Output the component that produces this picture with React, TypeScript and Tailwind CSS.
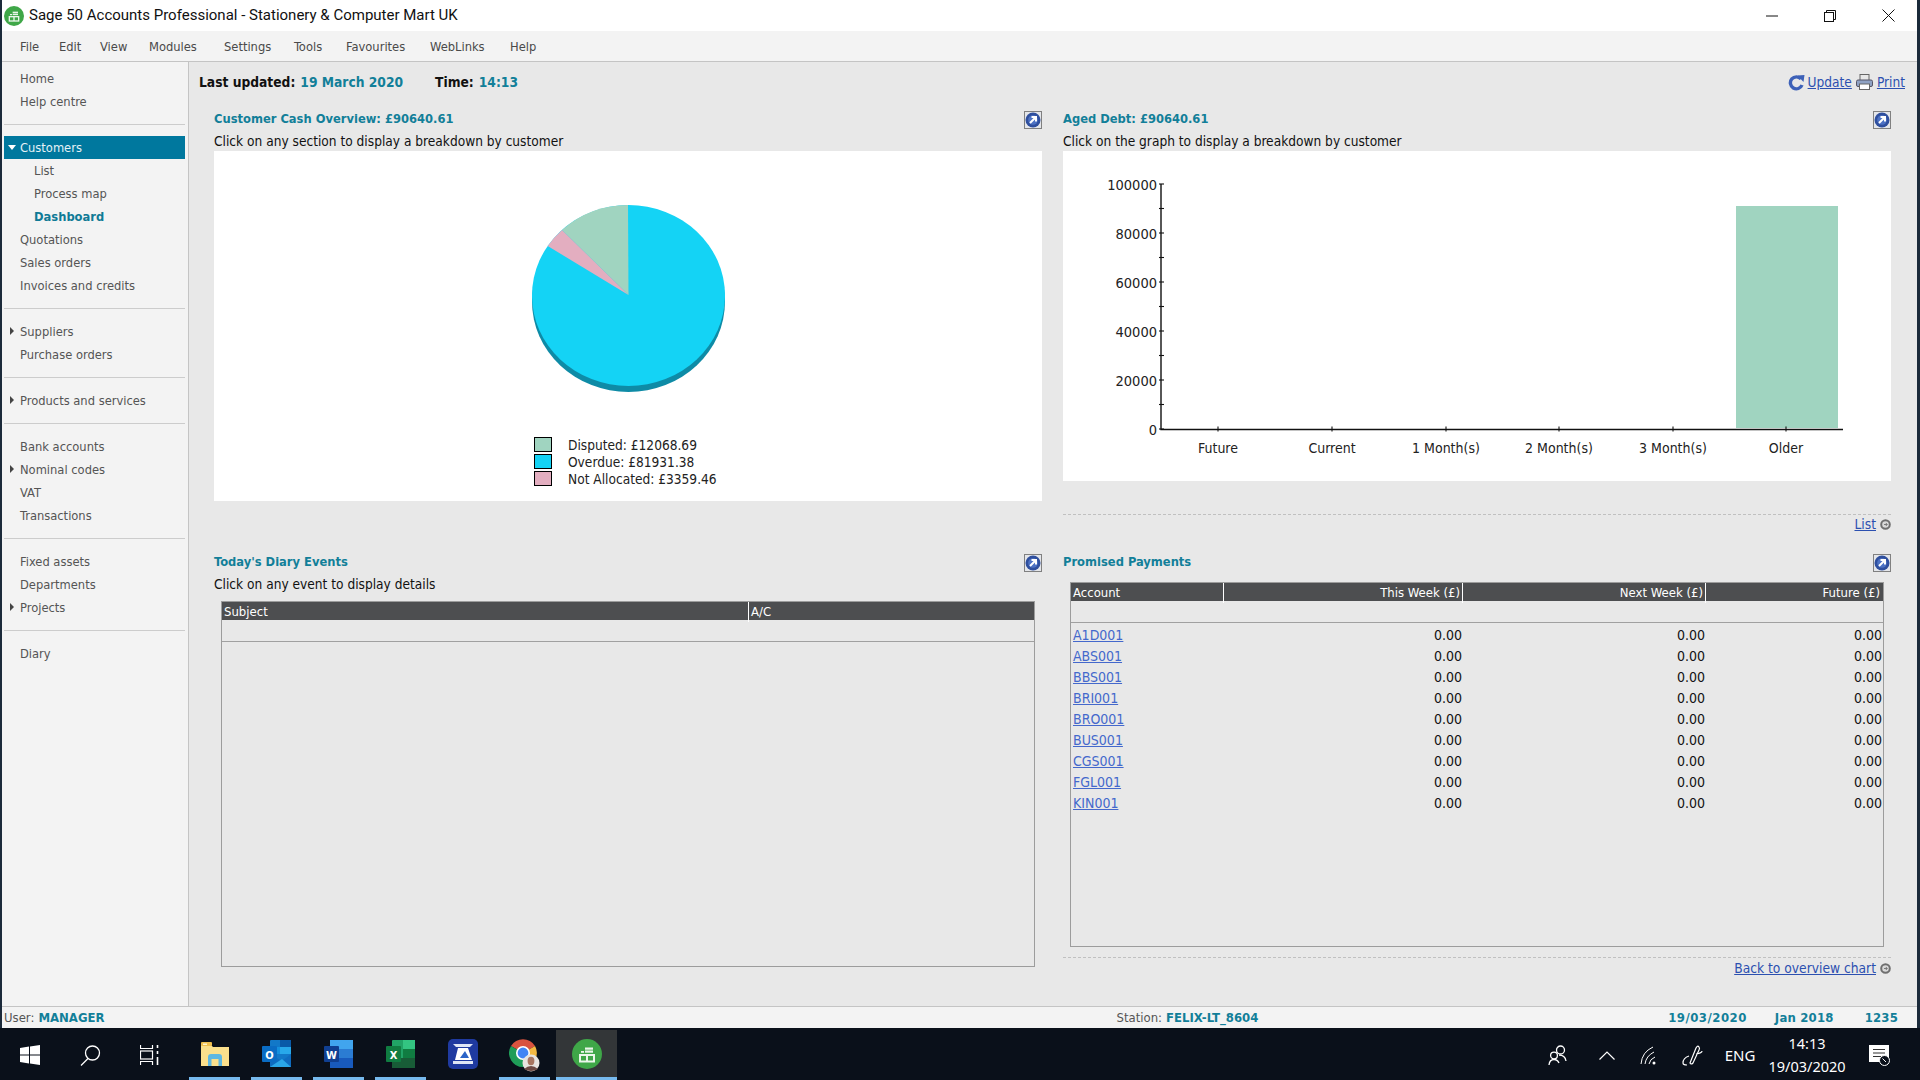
import React from "react";

const SIDE_GROUPS: { label: string; kind?: string; arrow?: boolean }[][] = [
  [{ label: "Home" }, { label: "Help centre" }],
  [
    { label: "Customers", kind: "active" },
    { label: "List", kind: "sub" },
    { label: "Process map", kind: "sub" },
    { label: "Dashboard", kind: "current" },
    { label: "Quotations" },
    { label: "Sales orders" },
    { label: "Invoices and credits" },
  ],
  [{ label: "Suppliers", arrow: true }, { label: "Purchase orders" }],
  [{ label: "Products and services", arrow: true }],
  [{ label: "Bank accounts" }, { label: "Nominal codes", arrow: true }, { label: "VAT" }, { label: "Transactions" }],
  [{ label: "Fixed assets" }, { label: "Departments" }, { label: "Projects", arrow: true }],
  [{ label: "Diary" }],
];

const MENU: [string, string][] = [
  ["File", "w-[39px]"],
  ["Edit", "w-[41px]"],
  ["View", "w-[49px]"],
  ["Modules", "w-[75px]"],
  ["Settings", "w-[70px]"],
  ["Tools", "w-[52px]"],
  ["Favourites", "w-[84px]"],
  ["WebLinks", "w-[80px]"],
  ["Help", "w-[40px]"],
];

const ACCOUNTS = ["A1D001", "ABS001", "BBS001", "BRI001", "BRO001", "BUS001", "CGS001", "FGL001", "KIN001"];

function CornerIcon() {
  return (
    <svg width="18" height="18" viewBox="0 0 18 18" className="shrink-0">
      <rect x="0.5" y="0.5" width="17" height="17" fill="#e4e6ea" stroke="#808080" />
      <circle cx="9" cy="9" r="7.5" fill="#2f4f9e" />
      <circle cx="9" cy="9" r="4.8" fill="#4d72c4" />
      <path d="M6 12 L11 7 M7.5 6 H12 V10.5" stroke="#fff" strokeWidth="2" fill="none" />
    </svg>
  );
}

function GoIcon() {
  return (
    <svg width="11" height="11" viewBox="0 0 11 11" className="shrink-0">
      <circle cx="5.5" cy="5.5" r="4.3" fill="#d9d9d9" stroke="#6f6f6f" strokeWidth="2" />
      <path d="M4 5.5 H7 M5.8 4 L7.3 5.5 L5.8 7" stroke="#6f6f6f" strokeWidth="0.9" fill="none" />
    </svg>
  );
}

function SageIcon({ size }: { size: number }) {
  return (
    <svg width={size} height={size} viewBox="0 0 30 30">
      <circle cx="15" cy="15" r="15" fill="#3fa748" />
      <rect x="7" y="15" width="16" height="8.5" fill="#eaf6ea" />
      <rect x="9" y="17" width="5" height="4.5" fill="#3fa748" />
      <rect x="16" y="17" width="5" height="4.5" fill="#3fa748" />
      <rect x="13" y="11.5" width="8" height="2.2" fill="#eaf6ea" />
      <rect x="13" y="8.5" width="8" height="2.2" fill="#eaf6ea" />
      <rect x="9" y="12" width="3" height="1.8" fill="#eaf6ea" />
    </svg>
  );
}

function Sidebar() {
  return (
    <aside className="w-[187px] shrink-0 border-r border-[#c4c4c4] bg-[#f3f3f3] text-[12.8px] text-[#555555] flex flex-col">
      {SIDE_GROUPS.map((g, i) => (
        <div key={i} className={i === 0 ? "ml-[2px] mr-[3px] pt-[5px] pb-[11px] border-b border-[#cccccc]" : i === SIDE_GROUPS.length - 1 ? "ml-[2px] mr-[3px] pt-[11px]" : "ml-[2px] mr-[3px] py-[11px] border-b border-[#cccccc]"}>
          {g.map((it) => {
            if (it.kind === "active") {
              return (
                <div key={it.label} className="h-[23px] flex items-center bg-[#00789e] text-[#e4f2f6] relative pl-[16px]">
                  <span className="absolute left-[4px] top-[9px] w-0 h-0 border-x-[4px] border-x-transparent border-t-[5px] border-t-white" />
                  {it.label}
                </div>
              );
            }
            return (
              <div
                key={it.label}
                className={
                  it.kind === "sub"
                    ? "h-[23px] flex items-center pl-[30px]"
                    : it.kind === "current"
                      ? "h-[23px] flex items-center pl-[30px] font-bold text-[#0f7a96]"
                      : "h-[23px] flex items-center pl-[16px] relative"
                }
              >
                {it.arrow && <span className="absolute left-[6px] top-[7px] w-0 h-0 border-y-[4px] border-y-transparent border-l-[4px] border-l-[#444444]" />}
                {it.label}
              </div>
            );
          })}
        </div>
      ))}
    </aside>
  );
}

function Pie() {
  return (
    <svg width="194" height="188" viewBox="0 0 194 188" className="mt-[54px] ml-[2px]">
      <ellipse cx="96.5" cy="96.5" rx="96.5" ry="90.5" fill="#0e8ba6" />
      <ellipse cx="96.5" cy="90.5" rx="96.5" ry="90.5" fill="#14d3f5" />
      <path d="M96.5 90 L96 0 A96.5 90.5 0 0 0 30 25 Z" fill="#a0d4c0" />
      <path d="M96.5 90 L30 25 A96.5 90.5 0 0 0 15.7 41 Z" fill="#e3aec0" />
    </svg>
  );
}

function BarChart() {
  const ys = [33, 57.5, 82, 106.5, 131, 155.5, 180, 204.5, 229, 253.5, 278];
  const yLabels: [string, number][] = [
    ["100000", 33],
    ["80000", 82],
    ["60000", 131],
    ["40000", 180],
    ["20000", 229],
    ["0", 278],
  ];
  const xs: [string, number][] = [
    ["Future", 155],
    ["Current", 269],
    ["1 Month(s)", 383],
    ["2 Month(s)", 496],
    ["3 Month(s)", 610],
    ["Older", 723],
  ];
  return (
    <svg width="828" height="330" viewBox="0 0 828 330" className="block">
      <rect x="673" y="55" width="102" height="222" fill="#a0d4c0" />
      <path d="M98 33 V278.5 H780" stroke="#111" strokeWidth="1.4" fill="none" />
      {ys.map((y) => (
        <path key={y} d={`M96 ${y} H101`} stroke="#111" strokeWidth="1.1" />
      ))}
      {xs.map(([l, x]) => (
        <path key={l} d={`M${x} 275.5 V280.5`} stroke="#111" strokeWidth="1.1" />
      ))}
      {yLabels.map(([l, y]) => (
        <text key={l} x="94" y={y + 6} textAnchor="end" fontSize="14.5" fill="#222">
          {l}
        </text>
      ))}
      {xs.map(([l, x]) => (
        <text key={l} x={x} y="302" textAnchor="middle" fontSize="14" fill="#222">
          {l}
        </text>
      ))}
    </svg>
  );
}

function CardHead({ title, sub }: { title: string; sub?: string }) {
  return (
    <div>
      <div className="h-[18px] flex items-center justify-between">
        <span className="pb-[2px] font-bold text-[12.8px] text-[#127f99]">{title}</span>
        <CornerIcon />
      </div>
      {sub && <div className="h-[22px] pt-[2px] flex items-center text-[13.6px] text-[#111111]">{sub}</div>}
    </div>
  );
}

function Payments() {
  const numCell = "pr-[1px] text-right";
  return (
    <div className="mt-[10px] ml-[7px] mr-[7px] h-[365px] border border-[#9c9c9c] text-[14px] flex flex-col">
      <div className="h-[18px] bg-[#4d4e50] text-[#ffffff] text-[13px] grid grid-cols-[153px_239px_243px_1fr]">
        <div className="pl-[2px] border-r border-white">Account</div>
        <div className="pr-[2px] text-right border-r border-white">This Week (£)</div>
        <div className="pr-[2px] text-right border-r border-white">Next Week (£)</div>
        <div className="pr-[3px] text-right">Future (£)</div>
      </div>
      <div className="h-[22px] border-b border-[#a0a0a0]" />
      <div className="pt-[2px]">
        {ACCOUNTS.map((a) => (
          <div key={a} className="h-[21px] grid grid-cols-[153px_239px_243px_1fr] items-center text-[#111111]">
            <a className="pl-[2px] text-[#4468cc] underline">{a}</a>
            <div className={numCell}>0.00</div>
            <div className={numCell}>0.00</div>
            <div className={numCell}>0.00</div>
          </div>
        ))}
      </div>
    </div>
  );
}

function Taskbar() {
  const item = "w-[51px] h-[50px] flex items-center justify-center border-b-[3px] border-[#76b9ed]";
  return (
    <div className="h-[52px] shrink-0 bg-[#0a101a] flex items-end text-white">
      <div className="w-[60px] h-[50px] flex items-center justify-center">
        <svg width="20" height="20" viewBox="0 0 20 20" fill="#fff">
          <path d="M0 3 L9 1.6 V9.4 H0 Z M10 1.4 L20 0 V9.4 H10 Z M0 10.4 H9 V18.4 L0 17 Z M10 10.4 H20 V20 L10 18.6 Z" />
        </svg>
      </div>
      <div className="w-[60px] h-[50px] flex items-center justify-center">
        <svg width="21" height="21" viewBox="0 0 21 21" fill="none" stroke="#fff" strokeWidth="1.3">
          <circle cx="12.5" cy="8" r="7" />
          <path d="M8 13.5 L1 20.5" />
        </svg>
      </div>
      <div className="w-[60px] h-[50px] flex items-center justify-center">
        <svg width="20" height="20" viewBox="0 0 20 20" fill="none" stroke="#fff" strokeWidth="1.2">
          <path d="M0.5 0 V3.5 H12.5 V0 M0.5 20 V16.5 H12.5 V20" />
          <rect x="0.5" y="6" width="12" height="8" />
          <path d="M17.5 0 V3 M17.5 6 V9 M17.5 12 V20" strokeWidth="1.6" />
        </svg>
      </div>
      <div className="w-[9px]" />
      <div className={item}>
        <svg width="28" height="24" viewBox="0 0 28 24">
          <path d="M0 3 H10 L12 5 H28 V24 H0 Z" fill="#fbe08c" />
          <rect x="0" y="0" width="11" height="4" rx="1" fill="#f0c050" />
          <rect x="2" y="1.5" width="4" height="1.5" fill="#fff6d0" />
          <path d="M7 24 V15 Q7 12 10 12 H18 Q21 12 21 15 V24 H17.5 V17 H10.5 V24 Z" fill="#5fb8e2" />
        </svg>
      </div>
      <div className="w-[11px]" />
      <div className={item}>
        <svg width="29" height="28" viewBox="0 0 29 28">
          <rect x="8" y="0" width="21" height="27" rx="1" fill="#1278c8" />
          <rect x="18" y="0" width="11" height="7" fill="#0a5aa8" />
          <rect x="18" y="7" width="11" height="7" fill="#28a8ea" />
          <rect x="8" y="7" width="10" height="7" fill="#1490df" />
          <path d="M8 14 L20 21 L29 14 V27 H8 Z" fill="#0f6cc0" />
          <path d="M8 27 L20 19 L29 27 Z" fill="#2aa6e8" />
          <rect x="0" y="6" width="15" height="16" rx="1" fill="#0a6cc4" />
          <text x="7.5" y="18.5" textAnchor="middle" fontSize="11" fontWeight="700" fill="#fff">O</text>
        </svg>
      </div>
      <div className="w-[11px]" />
      <div className={item}>
        <svg width="29" height="28" viewBox="0 0 29 28">
          <rect x="6" y="0" width="23" height="28" rx="1" fill="#2b7cd3" />
          <rect x="6" y="0" width="23" height="9" fill="#41a5ee" />
          <rect x="6" y="18" width="23" height="10" fill="#185abd" />
          <rect x="0" y="6" width="15" height="16" rx="1" fill="#103f91" />
          <text x="7.5" y="18.5" textAnchor="middle" fontSize="11" fontWeight="700" fill="#fff">W</text>
        </svg>
      </div>
      <div className="w-[11px]" />
      <div className={item}>
        <svg width="29" height="28" viewBox="0 0 29 28">
          <rect x="6" y="0" width="23" height="28" rx="1" fill="#21a366" />
          <rect x="17" y="0" width="12" height="9" fill="#33c481" />
          <rect x="17" y="9" width="12" height="9" fill="#107c41" />
          <rect x="6" y="18" width="23" height="10" fill="#185c37" />
          <rect x="0" y="6" width="15" height="16" rx="1" fill="#107c41" />
          <text x="7.5" y="18.5" textAnchor="middle" fontSize="11" fontWeight="700" fill="#fff">X</text>
        </svg>
      </div>
      <div className="w-[11px]" />
      <div className="w-[51px] h-[50px] flex items-center justify-center pb-[3px]">
        <svg width="30" height="30" viewBox="0 0 30 30">
          <rect width="30" height="30" rx="5" fill="#1f3aa0" />
          <path d="M5 5 H25 L22 8 H8 Z" fill="#dfe6f5" />
          <path d="M7 21 L10 9 H20 L24 21 Z" fill="#fff" />
          <path d="M12 19 L17 12 L21 19 Z" fill="#2a63c8" />
          <rect x="5" y="22" width="20" height="3" fill="#dfe6f5" />
        </svg>
      </div>
      <div className="w-[11px]" />
      <div className={item}>
        <svg width="31" height="33" viewBox="0 0 31 33" className="mt-[3px]">
          <path d="M14 14 L2 7 A14 14 0 0 1 26 7 Z" fill="#d9533f" />
          <path d="M14 14 L26 7 A14 14 0 0 1 15 28 Z" fill="#f4b942" />
          <path d="M14 14 L15 28 A14 14 0 0 1 2 7 Z" fill="#1f9d58" />
          <circle cx="14" cy="14" r="6.2" fill="#4285f4" stroke="#fff" strokeWidth="1.6" />
          <circle cx="22" cy="24" r="8.5" fill="#e8e4e0" />
          <ellipse cx="22" cy="22" rx="3.4" ry="4.2" fill="#a87560" />
          <path d="M15 30 Q22 24 29 30 Q22 34 15 30 Z" fill="#6e4a44" />
        </svg>
      </div>
      <div className="w-[6px]" />
      <div className="w-[61px] h-[50px] flex items-center justify-center bg-[#333638] border-b-[3px] border-[#76b9ed]">
        <SageIcon size={30} />
      </div>

      <div className="ml-auto flex items-center h-[50px] text-[16px] font-['Noto_Sans',sans-serif] font-stretch-normal">
        <div className="w-[50px] flex justify-center">
          <svg width="19" height="20" viewBox="0 0 19 20" fill="none" stroke="#fff" strokeWidth="1.3">
            <circle cx="12.5" cy="5" r="4" />
            <circle cx="6" cy="10.5" r="3.4" />
            <path d="M1 20 Q1.5 14.5 6 14.5 Q9.5 14.5 11 18 M11 10 Q17 10 18 16" />
          </svg>
        </div>
        <div className="w-[50px] flex justify-center">
          <svg width="16" height="9" viewBox="0 0 16 9" fill="none" stroke="#fff" strokeWidth="1.2">
            <path d="M0.5 8.5 L8 1 L15.5 8.5" />
          </svg>
        </div>
        <div className="w-[32px] flex justify-center">
          <svg width="16" height="19" viewBox="0 0 16 19" fill="none" stroke="#fff" strokeWidth="1">
            <path d="M1 18 Q2 6 13 1 M5 18 Q6 10 14 6 M9 18 Q10 13 15 11" />
            <circle cx="14" cy="17" r="1.5" fill="#fff" stroke="none" />
          </svg>
        </div>
        <div className="w-[56px] flex justify-center">
          <svg width="21" height="21" viewBox="0 0 21 21" fill="none" stroke="#fff" strokeWidth="1.2">
            <path d="M8 18 L14 3 Q15.5 0 17 2 Q18 3.5 17 5 L11 18 Q9 20 8 18 Z M14 9 Q20 8 20 6 M7 11 Q1 13 1 18 Q1 20 5 20" />
          </svg>
        </div>
        <div className="w-[40px] text-center text-[15px]">ENG</div>
        <div className="w-[94px] text-center text-[14.5px] leading-[23px] pb-[1px]">
          <div>14:13</div>
          <div>19/03/2020</div>
        </div>
        <div className="w-[50px] flex justify-center">
          <svg width="21" height="21" viewBox="0 0 21 21">
            <path d="M0 0 H20 V17 H0 Z" fill="#fff" />
            <path d="M4 4.5 H16 M4 8 H16 M4 11.5 H12" stroke="#333" strokeWidth="1" />
            <circle cx="15.5" cy="15.5" r="5" fill="#0a101a" stroke="#fff" strokeWidth="1" />
            <path d="M13.5 13.5 L17 17" stroke="#fff" strokeWidth="1" />
          </svg>
        </div>
        <div className="w-[16px]" />
      </div>
    </div>
  );
}

export default function App() {
  return (
    <div className="w-[1920px] h-[1080px] overflow-hidden flex flex-col bg-[#1b2a3a] font-['DejaVu_Sans',sans-serif] font-stretch-condensed">
      <div className="flex-1 min-h-0 flex flex-col ml-[2px] mr-[3px] bg-[#e8e8e8]">
        {/* title bar */}
        <div className="h-[31px] shrink-0 bg-white flex items-center pl-[2px] relative">
          <SageIcon size={20} />
          <span className="ml-[5px] text-[15px] text-[#111111] font-['Roboto',sans-serif] font-stretch-normal">Sage 50 Accounts Professional - Stationery &amp; Computer Mart UK</span>
          <div className="ml-auto flex items-center">
            <div className="w-[58px] flex justify-center">
              <svg width="12" height="2" viewBox="0 0 12 2"><path d="M0 1 H12" stroke="#111" /></svg>
            </div>
            <div className="w-[58px] flex justify-center">
              <svg width="12" height="12" viewBox="0 0 12 12" fill="none" stroke="#111">
                <rect x="0.5" y="2.5" width="9" height="9" />
                <path d="M2.5 2.5 V0.5 H11.5 V9.5 H9.5" />
              </svg>
            </div>
            <div className="w-[58px] flex justify-center">
              <svg width="13" height="13" viewBox="0 0 13 13" stroke="#111"><path d="M0.5 0.5 L12.5 12.5 M12.5 0.5 L0.5 12.5" /></svg>
            </div>
          </div>
        </div>
        {/* menu */}
        <div className="h-[31px] shrink-0 bg-[#f3f3f3] border-b border-[#c4c4c4] pl-[18px] pt-[2px] flex items-center text-[12.8px] text-[#4a4a4a]">
          {MENU.map(([m, c]) => (
            <span key={m} className={`shrink-0 ${c}`}>{m}</span>
          ))}
        </div>
        <div className="flex-1 min-h-0 flex">
          <Sidebar />
          <main className="flex-1 min-w-0 flex flex-col pl-[25px] pr-[26px]">
            <div className="h-[49px] shrink-0 pt-[9px] -ml-[15px] -mr-[14px] flex items-start justify-between">
              <div className="flex h-[22px] items-center font-bold text-[13.7px] text-[#111111]">
                <span>Last updated:</span>
                <span className="ml-[5px] text-[#127f99]">19 March 2020</span>
                <span className="ml-[32px]">Time:</span>
                <span className="ml-[5px] text-[#127f99]">14:13</span>
              </div>
              <div className="flex h-[22px] items-center text-[13.6px] text-[#2c50b0]">
                <svg width="17" height="17" viewBox="0 0 17 17" fill="none">
                  <path d="M13 5 A6 6 0 1 0 14 11" stroke="#3d61b8" strokeWidth="3.4" />
                  <path d="M9.5 1.5 L16.5 1 L15.5 8 Z" fill="#3d61b8" />
                </svg>
                <a className="ml-[3px] underline">Update</a>
                <svg width="17" height="16" viewBox="0 0 17 16" className="ml-[4px]">
                  <rect x="4" y="0.5" width="9" height="6" fill="#e8e8e8" stroke="#666" />
                  <rect x="0.5" y="6" width="16" height="6.5" rx="1.5" fill="#8fa2c4" stroke="#556" />
                  <rect x="3.5" y="10" width="10" height="5.5" fill="#fff" stroke="#666" />
                </svg>
                <a className="ml-[4px] underline">Print</a>
              </div>
            </div>
            <div className="flex-1 min-h-0 grid grid-cols-2 gap-x-[21px] grid-rows-[443px_1fr]">
              {/* customer cash */}
              <section>
                <CardHead title="Customer Cash Overview: £90640.61" sub="Click on any section to display a breakdown by customer" />
                <div className="h-[350px] bg-white flex flex-col items-center">
                  <Pie />
                  <div className="self-start ml-[320px] mt-[43px] flex flex-col text-[13.6px] text-[#222222]">
                    {(
                      [
                        ["bg-[#a0d4c0]", "Disputed: £12068.69"],
                        ["bg-[#14d3f5]", "Overdue: £81931.38"],
                        ["bg-[#e3aec0]", "Not Allocated: £3359.46"],
                      ] as [string, string][]
                    ).map(([c, t]) => (
                      <div key={t} className="h-[17px] flex items-center">
                        <span className={`w-[18px] h-[15px] border border-black ${c}`} />
                        <span className="ml-[16px] pt-[1px]">{t}</span>
                      </div>
                    ))}
                  </div>
                </div>
              </section>
              {/* aged debt */}
              <section>
                <CardHead title="Aged Debt: £90640.61" sub="Click on the graph to display a breakdown by customer" />
                <div className="h-[330px] bg-white">
                  <BarChart />
                </div>
                <div className="mt-[33px] border-t border-dashed border-[#c0c0c0]" />
                <div className="h-[18px] flex items-center justify-end gap-[4px] text-[13.7px] text-[#2c50b0]">
                  <a className="underline">List</a>
                  <GoIcon />
                </div>
              </section>
              {/* diary */}
              <section>
                <CardHead title="Today's Diary Events" sub="Click on any event to display details" />
                <div className="mt-[7px] ml-[7px] mr-[7px] h-[366px] border border-[#9c9c9c] flex flex-col">
                  <div className="h-[18px] bg-[#4d4e50] text-white text-[13px] grid grid-cols-[527px_1fr]">
                    <div className="pl-[2px] border-r border-white">Subject</div>
                    <div className="pl-[2px]">A/C</div>
                  </div>
                  <div className="h-[22px] border-b border-[#a0a0a0]" />
                </div>
              </section>
              {/* promised */}
              <section>
                <CardHead title="Promised Payments" />
                <Payments />
                <div className="mt-[10px] border-t border-dashed border-[#c0c0c0]" />
                <div className="mt-[1px] h-[18px] flex items-center justify-end gap-[4px] text-[13.7px] text-[#2c50b0]">
                  <a className="underline">Back to overview chart</a>
                  <GoIcon />
                </div>
              </section>
            </div>
          </main>
        </div>
        {/* status */}
        <div className="h-[22px] shrink-0 bg-[#f3f3f3] border-t border-[#c4c4c4] pt-[1px] flex items-center text-[13px] text-[#555555] pl-[2px]">
          <span>User:</span>
          <span className="ml-[4px] font-bold text-[#127f99]">MANAGER</span>
          <span className="ml-[1012px]">Station:</span>
          <span className="ml-[4px] font-bold text-[#127f99]">FELIX-LT_8604</span>
          <span className="ml-auto font-bold text-[#127f99] tracking-[0.5px]">19/03/2020</span>
          <span className="ml-[28px] font-bold text-[#127f99] tracking-[0.2px]">Jan 2018</span>
          <span className="ml-[31px] mr-[19px] font-bold text-[#127f99] tracking-[0.2px]">1235</span>
        </div>
      </div>
      <Taskbar />
    </div>
  );
}
